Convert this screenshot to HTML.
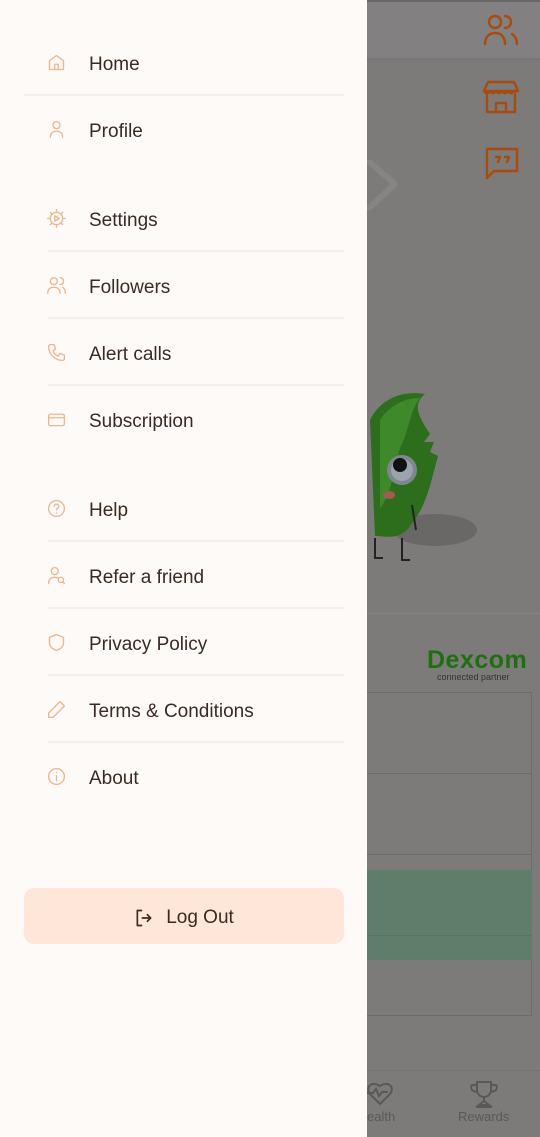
<!DOCTYPE html>
<html><head><style>
*{margin:0;padding:0;box-sizing:border-box}
body{width:540px;height:1137px;position:relative;overflow:hidden;background:#7d7b79;font-family:"Liberation Sans",sans-serif}
.bg{position:absolute}
.drawer{position:absolute;left:0;top:0;width:367px;height:1137px;background:#fdfaf8}
.item{position:absolute;left:46px;width:300px;height:24px}
.item svg{position:absolute;left:0;top:1px;width:21px;height:21px;fill:none;stroke:#eeb48e;stroke-width:1.5;stroke-linecap:round;stroke-linejoin:round}
.item span{position:absolute;left:43px;font-size:19px;color:#3b2a24;white-space:nowrap;top:3px}
.div{position:absolute;left:48px;width:296px;height:2px;background:#f7eee8}
.ri svg{position:absolute;fill:none;stroke:#a84b10;stroke-width:2.4;stroke-linecap:round;stroke-linejoin:round}
</style></head><body>
<div class="bg" style="left:367px;top:0;width:173px;height:58px;background:#828080;border-top:2px solid #6a6866"></div>
<div class="bg" style="left:367px;top:58px;width:173px;height:6px;background:linear-gradient(#777573,#7d7b79)"></div>
<div class="ri">
<svg style="left:482px;top:12px" width="38" height="36" viewBox="0 0 38 36"><circle cx="13" cy="10" r="6"/><path d="M3 32c0-7 4-11 10-11s10 4 10 11"/><path d="M23 4a6 6 0 0 1 0 12"/><path d="M30 22c3 2 5 5 5 10"/></svg>
<svg style="left:482px;top:78px" width="38" height="38" viewBox="0 0 38 38"><path d="M6 4h26l4 9H2z"/><path d="M2 13c2 3 4 3 6 0c2 3 4 3 6 0c2 3 4 3 6 0c2 3 4 3 6 0c2 3 4 3 6 0"/><path d="M5 16v18h28V16"/><path d="M14 34v-9h10v9"/></svg>
<svg style="left:484px;top:146px" width="36" height="36" viewBox="0 0 36 36"><path d="M3 3h30v22H10l-7 7z"/><path d="M12 11h4l-2 5M21 11h4l-2 5"/></svg>
</div>
<svg class="bg" style="left:367px;top:160px" width="30" height="50" viewBox="0 0 30 50"><path d="M0 0l28 24L0 50" fill="none" stroke="#878583" stroke-width="6"/></svg>
<svg class="bg" style="left:360px;top:390px" width="120" height="175" viewBox="0 0 120 175">
<ellipse cx="75" cy="140" rx="42" ry="16" fill="#6a6866"/>
<path d="M10 30C20 10 40 0 65 4c-12 10-8 20 5 40l-6 8 10 0-4 10 8 4-8 30c-5 15-8 25-20 40-10 15-25 10-35 10z" fill="#2c6e1c"/>
<path d="M20 30C30 15 45 8 60 8c-10 12-10 30-20 50-5 20-10 50-20 60z" fill="#3e8a2a"/>
<circle cx="42" cy="80" r="15" fill="#7e8790"/><circle cx="42" cy="80" r="11" fill="#9ba3ab"/><circle cx="40" cy="75" r="7" fill="#111"/>
<ellipse cx="29" cy="105" rx="6" ry="4" fill="#9e5c52"/>
<path d="M15 148v20h8M42 148v22h8M52 115l4 25" stroke="#222" stroke-width="2" fill="none"/>
</svg>
<div class="bg" style="left:367px;top:613px;width:173px;height:1px;background:#858381"></div>
<div class="bg" style="left:427px;top:646px;font-size:25px;font-weight:bold;color:#1f6e12;letter-spacing:0.5px">Dexcom</div>
<div class="bg" style="left:437px;top:672px;font-size:9px;color:#333">connected partner</div>
<div class="bg" style="left:367px;top:692px;width:165px;height:324px;border:1px solid #6e6c6a;border-left:none"></div>
<div class="bg" style="left:367px;top:773px;width:165px;height:1px;background:#6e6c6a"></div>
<div class="bg" style="left:367px;top:854px;width:165px;height:1px;background:#6e6c6a"></div>
<div class="bg" style="left:367px;top:870px;width:165px;height:90px;background:#5f7d6b"></div>
<div class="bg" style="left:367px;top:935px;width:165px;height:1px;background:#587564"></div>
<div class="bg" style="left:367px;top:1070px;width:173px;height:1px;background:#767472"></div>
<svg class="bg" style="left:367px;top:1080px" width="28" height="28" viewBox="0 0 28 28"><path d="M13 24L3 14C-2 8 4 0 13 6c9-6 15 2 10 8z M0 13h6l3-4 3 7 3-4h6" fill="none" stroke="#5a5856" stroke-width="2"/></svg>
<div class="bg" style="left:367px;top:1109px;font-size:13px;color:#5a5856">ealth</div>
<svg class="bg" style="left:468px;top:1080px" width="32" height="30" viewBox="0 0 32 30"><path d="M9 2h14v8a7 7 0 0 1-14 0z M9 5H4a4 4 0 0 0 5 6 M23 5h5a4 4 0 0 1-5 6 M16 17v4 M11 25l5-4 5 4z M8 27h16" fill="none" stroke="#5a5856" stroke-width="2"/></svg>
<div class="bg" style="left:458px;top:1109px;font-size:13px;color:#5a5856">Rewards</div>

<div class="drawer">
<div class="item" style="top:51px"><svg viewBox="0 0 24 24"><path d="M4 10l8-6 8 6v10H4z"/><path d="M10 20v-6h4v6"/></svg><span>Home</span></div>
<div class="div" style="left:24px;width:320px;top:94px"></div>
<div class="item" style="top:118px"><svg viewBox="0 0 24 24"><circle cx="12" cy="7" r="4"/><path d="M5 21c0-5 3-7 7-7s7 2 7 7"/></svg><span>Profile</span></div>
<div class="item" style="top:207px"><svg viewBox="0 0 24 24"><circle cx="12" cy="12" r="7"/><path d="M12 2v3M12 19v3M2 12h3M19 12h3M5 5l2 2M17 17l2 2M5 19l2-2M17 7l2-2"/><path d="M10 9l5 3-5 3z"/></svg><span>Settings</span></div>
<div class="div" style="top:250px"></div>
<div class="item" style="top:274px"><svg viewBox="0 0 24 24"><circle cx="9" cy="7" r="4"/><path d="M2 21c0-5 3-7 7-7s7 2 7 7M16 3a4 4 0 0 1 0 8M19 14c2 1 3 3 3 7"/></svg><span>Followers</span></div>
<div class="div" style="top:317px"></div>
<div class="item" style="top:341px"><svg viewBox="0 0 24 24"><path d="M5 3h4l2 5-3 2c1 3 3 5 6 6l2-3 5 2v4c0 1-1 2-2 2C10 21 3 14 3 5c0-1 1-2 2-2z"/></svg><span>Alert calls</span></div>
<div class="div" style="top:384px"></div>
<div class="item" style="top:408px"><svg viewBox="0 0 24 24"><rect x="3" y="6" width="18" height="13" rx="2"/><path d="M3 10h18"/></svg><span>Subscription</span></div>
<div class="item" style="top:497px"><svg viewBox="0 0 24 24"><circle cx="12" cy="12" r="9"/><path d="M9.5 9.5a2.5 2.5 0 1 1 3.5 2.3c-1 .5-1 1-1 2M12 17h.01"/></svg><span>Help</span></div>
<div class="div" style="top:540px"></div>
<div class="item" style="top:564px"><svg viewBox="0 0 24 24"><circle cx="10" cy="7" r="4"/><path d="M3 21c0-5 3-7 7-7 2 0 3 .5 4 1"/><circle cx="17" cy="17" r="3"/><path d="M19 19l2 2"/></svg><span>Refer a friend</span></div>
<div class="div" style="top:607px"></div>
<div class="item" style="top:631px"><svg viewBox="0 0 24 24"><path d="M12 3l8 3v6c0 5-4 8-8 9-4-1-8-4-8-9V6z"/></svg><span>Privacy Policy</span></div>
<div class="div" style="top:674px"></div>
<div class="item" style="top:698px"><svg viewBox="0 0 24 24"><path d="M16 3l5 5L8 21H3v-5z"/></svg><span>Terms &amp; Conditions</span></div>
<div class="div" style="top:741px"></div>
<div class="item" style="top:765px"><svg viewBox="0 0 24 24"><circle cx="12" cy="12" r="9"/><path d="M12 11v6M12 7.5h.01"/></svg><span>About</span></div>
<div style="position:absolute;left:24px;top:888px;width:320px;height:56px;background:#fee6d8;border-radius:10px;display:flex;align-items:center;justify-content:center;font-size:19px;color:#3b2a24;padding-top:3px">
<svg width="20" height="20" viewBox="0 0 24 24" style="margin-right:12px;fill:none;stroke:#3b2a24;stroke-width:2;stroke-linecap:round;stroke-linejoin:round"><path d="M9 3H4v18h5M10 12h10M16 8l4 4-4 4"/></svg>Log Out</div>
</div>
</body></html>
